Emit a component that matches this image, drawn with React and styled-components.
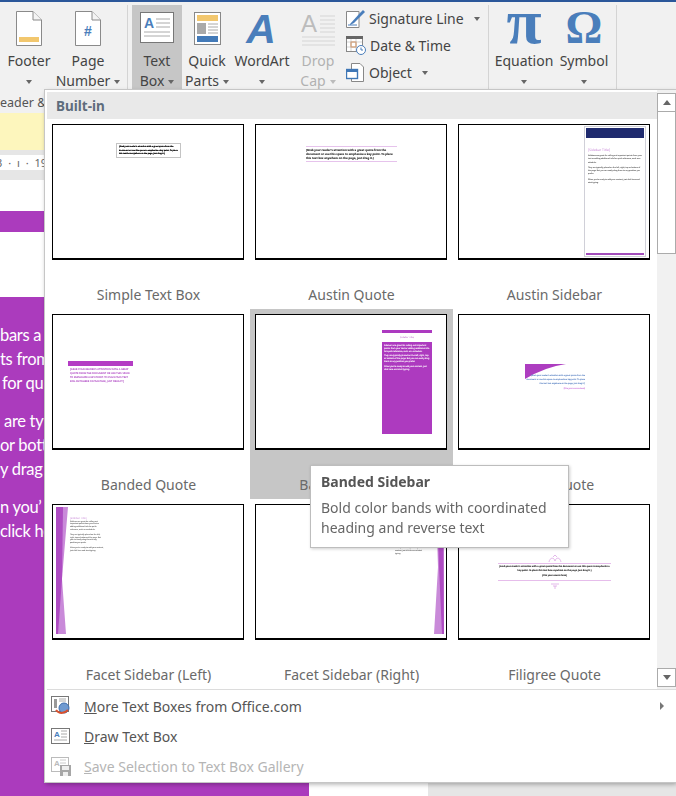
import React from 'react';
import styled, { createGlobalStyle } from 'styled-components';

const UI_FONT = `"Noto Sans", "Open Sans", "Liberation Sans", sans-serif`;
const PURPLE = '#ab3bbd';
const ICON_BLUE = '#4a7ebb';

const GlobalStyle = createGlobalStyle`
  html, body {
    margin: 0;
    padding: 0;
    background: #fff;
  }
  body {
    font-family: ${UI_FONT};
  }
`;

const Screen = styled.div`
  position: relative;
  width: 676px;
  height: 796px;
  overflow: hidden;
  display: flex;
  flex-direction: column;
`;

/* ribbon */
const Ribbon = styled.div`
  height: 111px;
  flex: none;
  border-top: 2px solid #2b579a;
  background: #f1f1f1;
  display: flex;
  flex-direction: column;
`;

const RibbonRow = styled.div`
  display: flex;
  height: 85px;
  margin-top: 3px;
  padding-left: 4px;
`;

const GroupCaption = styled.div`
  padding-top: 3px;
  font-size: 12.5px;
  line-height: 20px;
  color: #555;
  white-space: nowrap;
`;

const GroupLine = styled.div`
  width: 1px;
  background: #d4d4d4;
  margin: 0 ${p => p.$after ?? 4}px 0 ${p => p.$before ?? 5}px;
`;

const BigButton = styled.div`
  width: ${p => p.$w}px;
  flex: none;
  display: flex;
  flex-direction: column;
  align-items: center;
  background: ${p => (p.$active ? '#c6c6c6' : 'transparent')};
  color: ${p => (p.$off ? '#b1b1b1' : '#444')};
  font-size: 14px;
  line-height: 20px;
  white-space: nowrap;
`;

const BigIcon = styled.div`
  height: 46px;
  flex: none;
  display: flex;
  align-items: center;
  justify-content: center;
  & svg {
    overflow: visible;
  }
`;

const Caret = styled.span`
  display: inline-block;
  width: 0;
  height: 0;
  margin-left: ${p => p.$gap ?? 4}px;
  vertical-align: 2px;
  border-left: 3.5px solid transparent;
  border-right: 3.5px solid transparent;
  border-top: 4px solid ${p => (p.$off ? '#bbb' : '#666')};
`;

const SmallColumn = styled.div`
  width: 142px;
  flex: none;
  padding-left: 2px;
  box-sizing: border-box;
  display: flex;
  flex-direction: column;
`;

const SmallButton = styled.div`
  height: 27px;
  display: flex;
  align-items: center;
  gap: 3px;
  font-size: 14px;
  color: #444;
  white-space: nowrap;
`;

const SmallCaret = styled(Caret)`
  margin-left: ${p => p.$gap}px;
  vertical-align: 0;
`;

/* document behind the menu */
const YellowBar = styled.div`
  height: 37px;
  flex: none;
  background: #fdf6bd;
`;

const GreyStrip = styled.div`
  height: ${p => p.$h}px;
  flex: none;
  background: #e6e6e6;
`;

const Ruler = styled.div`
  height: 15px;
  flex: none;
  background: #fff;
  color: #666;
  font-size: 11px;
  line-height: 15px;
  white-space: nowrap;
  word-spacing: 3px;
  text-indent: -4px;
`;

const Workspace = styled.div`
  flex: 1;
  display: flex;
  background: #e6e6e6;
`;

const Page = styled.div`
  width: 428px;
  background: #fff;
  display: flex;
  flex-direction: column;
  padding-top: 31px;
  box-sizing: border-box;
`;

const TitleBand = styled.div`
  height: 21px;
  flex: none;
  background: ${PURPLE};
`;

const PurpleColumn = styled.div`
  flex: 1;
  width: 309px;
  margin-top: 65px;
  padding-top: 26px;
  background: ${PURPLE};
  color: #fff;
  font-family: Lato, "Open Sans", sans-serif;
  font-size: 16.5px;
  letter-spacing: -0.3px;
  line-height: 24px;
`;

const ColumnPara = styled.div`
  margin-bottom: 14px;
`;

const ColumnLine = styled.div`
  padding-left: ${p => p.$x || 0}px;
  white-space: nowrap;
`;

/* dropdown */
const Menu = styled.div`
  position: absolute;
  left: 45px;
  top: 90px;
  right: 0;
  height: 692px;
  box-sizing: border-box;
  padding-left: 2px;
  background: #fff;
  box-shadow: 0 0 0 1px #c6c6c6, 1px 2px 5px rgba(0, 0, 0, 0.35);
  display: flex;
  flex-direction: column;
`;

const GalleryArea = styled.div`
  height: 599px;
  flex: none;
  display: flex;
  border-bottom: 1px solid #dcdcdc;
`;

const GalleryPane = styled.div`
  width: 610px;
  flex: none;
  padding-top: 2px;
  box-sizing: border-box;
  overflow: hidden;
`;

const SectionHead = styled.div`
  height: 27px;
  padding-left: 9px;
  background: #e9e9e9;
  color: #5e6c7c;
  font-size: 13.5px;
  font-weight: 700;
  line-height: 28px;
`;

const Grid = styled.div`
  display: grid;
  grid-template-columns: repeat(3, 203px);
  grid-auto-rows: 190px;
`;

const Cell = styled.div`
  padding: 5px;
  box-sizing: border-box;
  background: ${p => (p.$hot ? '#c6c6c6' : 'transparent')};
`;

const Thumb = styled.div`
  width: 192px;
  height: 136px;
  box-sizing: border-box;
  border: 1px solid #000;
  border-bottom-width: 2px;
  background: #fff;
  overflow: hidden;
  display: flex;
  flex-direction: column;
  align-items: ${p => p.$align || 'flex-start'};
`;

const CellLabel = styled.div`
  margin-top: 25px;
  text-align: center;
  color: #6a6a6a;
  font-size: 14px;
  line-height: 20px;
`;

const Tiny = styled.div`
  font-size: ${p => p.$size || 2.2}px;
  line-height: ${p => p.$lh || 3.6}px;
  font-weight: ${p => (p.$bold ? 700 : 400)};
  color: ${p => p.$color || '#222'};
  text-align: ${p => p.$align || 'left'};
  margin-top: ${p => p.$top || 0}px;
  text-rendering: geometricPrecision;
  will-change: opacity;
  -webkit-text-stroke: ${p => p.$ink || 0}px currentColor;
`;

const SimpleBox = styled.div`
  width: 65px;
  height: 15px;
  box-sizing: border-box;
  margin: 18px 0 0 63px;
  padding: 1px 2px;
  border: 1px solid #c4c4c4;
`;

const RuledQuote = styled.div`
  width: 91px;
  margin: 21px 0 0 50px;
  padding: 1px 0;
  border-top: 1px solid #e6c3ec;
  border-bottom: 1px solid #e6c3ec;
`;

const AustinSide = styled.div`
  width: 62px;
  height: 131px;
  box-sizing: border-box;
  margin: 1px 3px 0 0;
  padding: 1px;
  border: 1px solid #d0d0d8;
  display: flex;
  flex-direction: column;
`;

const NavyHead = styled.div`
  height: 10px;
  flex: none;
  background: #1f2a6e;
`;

const AustinBody = styled.div`
  flex: 1;
  padding: 9px 2px 0;
`;

const AustinFoot = styled.div`
  height: 2px;
  flex: none;
  background: #a24dbb;
`;

const BandedQuoteBox = styled.div`
  width: 65px;
  margin: 46px 0 0 15px;
`;

const QuoteBand = styled.div`
  height: 5px;
  margin-bottom: 2px;
  background: #b43cc4;
`;

const QuoteCopy = styled.div`
  padding: 0 2px;
`;

const BandedSide = styled.div`
  width: 50px;
  margin: 15px 14px 0 0;
`;

const SideBandTop = styled.div`
  height: 3px;
  background: #ac3ac0;
`;

const SideBandBody = styled.div`
  height: 92px;
  box-sizing: border-box;
  margin-top: 2px;
  padding: 3px 2px;
  background: #ad3abf;
`;

const WedgeBlock = styled.div`
  width: 60px;
  margin: 49px 0 0 66px;
`;

const Wedge = styled.svg`
  display: block;
  margin-bottom: -6px;
`;

const FacetRow = styled.div`
  display: flex;
  height: 100%;
  width: 100%;
  justify-content: ${p => (p.$right ? 'flex-end' : 'flex-start')};
  padding: 2px 2px 3px 3px;
  box-sizing: border-box;
`;

const FacetText = styled.div`
  width: ${p => p.$w}px;
  margin: ${p => p.$top}px ${p => p.$mr || 0}px 0 1px;
`;

const FacetShape = styled.svg`
  flex: none;
`;

const FiligreeBlock = styled.div`
  width: 113px;
  margin: 50px 0 0 39px;
  display: flex;
  flex-direction: column;
  align-items: center;
`;

const FiligreeRule = styled.div`
  width: 100%;
  padding: 1px 0 2px;
  border-top: 1px solid #e6bdeb;
  border-bottom: 1px solid #e6bdeb;
`;

const Ornament = styled.svg`
  display: block;
  margin-top: ${p => p.$top || 0}px;
`;

const Scrollbar = styled.div`
  flex: 1;
  padding-top: 3px;
  background: #f1f1f1;
  display: flex;
  flex-direction: column;
  align-items: stretch;
`;

const ScrollButton = styled.div`
  height: 19px;
  flex: none;
  box-sizing: border-box;
  border: 1px solid #ababab;
  background: #fff;
  display: flex;
  align-items: center;
  justify-content: center;
  margin-top: ${p => (p.$down ? 'auto' : '0')};
  margin-bottom: ${p => (p.$down ? '2px' : '0')};
`;

const ScrollArrow = styled.span`
  width: 0;
  height: 0;
  border-left: 4.5px solid transparent;
  border-right: 4.5px solid transparent;
  border-${p => (p.$down ? 'top' : 'bottom')}: 5px solid #666;
`;

const ScrollThumb = styled.div`
  height: 142px;
  flex: none;
  box-sizing: border-box;
  border: 1px solid #ababab;
  border-top: 0;
  background: #fff;
`;

const MenuList = styled.div`
  padding-top: 1px;
  display: flex;
  flex-direction: column;
`;

const MenuItem = styled.div`
  height: 30px;
  display: flex;
  align-items: center;
  padding: 0 12px 0 4px;
  color: ${p => (p.$off ? '#b5b5b5' : '#555')};
  font-size: 14px;
  white-space: nowrap;
`;

const MenuIcon = styled.div`
  width: 33px;
  flex: none;
  display: flex;
`;

const SubArrow = styled.span`
  margin-left: auto;
  width: 0;
  height: 0;
  border-top: 4px solid transparent;
  border-bottom: 4px solid transparent;
  border-left: 4px solid #777;
`;

const Tooltip = styled.div`
  position: absolute;
  left: 310px;
  top: 465px;
  width: 259px;
  height: 83px;
  box-sizing: border-box;
  padding: 6px 10px;
  background: #fff;
  border: 1px solid #bdbdbd;
  box-shadow: 1px 1px 3px rgba(0, 0, 0, 0.2);
  color: #666;
  font-size: 14px;
  line-height: 20px;
`;

const TooltipTitle = styled.div`
  font-weight: 700;
  color: #555;
  margin-bottom: 6px;
`;

/* icons */
const DocIcon = ({ children }) => (
  <svg width="26" height="35" viewBox="0 0 26 35">
    <path d="M.5.5H17L25.5 9V34.5H.5Z" fill="#fff" stroke="#8a8a8a" />
    <path d="M17 .5V9H25.5" fill="#f4f4f4" stroke="#8a8a8a" />
    {children}
  </svg>
);

const TextBoxIcon = () => (
  <svg width="34" height="32" viewBox="0 0 34 32">
    <rect x=".5" y=".5" width="33" height="30" fill="#fff" stroke="#777" />
    <text x="4" y="16" fontFamily="Liberation Sans" fontWeight="bold" fontSize="14" fill={ICON_BLUE}>A</text>
    <path d="M16 7H30M16 11H30M16 15H30M4 20H30M4 24H30" stroke="#aaa" />
  </svg>
);

const QuickPartsIcon = () => (
  <svg width="27" height="33" viewBox="0 0 27 33">
    <rect x=".5" y=".5" width="26" height="32" fill="#fff" stroke="#888" />
    <rect x="3" y="3" width="21" height="6" fill="#f2c76e" />
    <rect x="3" y="11" width="9" height="11" fill="#a9a9a9" />
    <path d="M14 12H24M14 15H24M14 18H24M14 21H24" stroke="#aaa" />
    <rect x="3" y="24" width="21" height="6" fill="#437ab8" />
  </svg>
);

const WordArtIcon = () => (
  <svg width="34" height="42" viewBox="0 0 34 42">
    <text x="16" y="36" textAnchor="middle" fontFamily="Liberation Sans" fontStyle="italic" fontWeight="bold" fontSize="41" fill={ICON_BLUE}>A</text>
  </svg>
);

const DropCapIcon = () => (
  <svg width="34" height="37" viewBox="0 -4 34 37">
    <text x="0" y="18" fontFamily="Liberation Sans" fontSize="24" fill="#bcbcbc">A</text>
    <path d="M19 2H34M19 6H34M19 10H34M19 14H34M19 18H34M1 23H34M1 27H34M1 31H34" stroke="#d5d5d5" />
  </svg>
);

const MathIcon = ({ glyph, size, y }) => (
  <svg width="42" height="44" viewBox="0 0 42 44">
    <text x="21" y={y} textAnchor="middle" fontFamily="Liberation Serif" fontWeight="bold" fontSize={size} fill={ICON_BLUE}>{glyph}</text>
  </svg>
);

const SignatureIcon = () => (
  <svg width="20" height="20" viewBox="0 0 20 20">
    <path d="M.5 2.5H13V18.5H.5Z" fill="#fff" stroke="#888" />
    <path d="M4 15L14 4L17 1L19 3L8 14L4 16Z" fill="#4a7ebb" />
    <path d="M2 16H11" stroke="#4a7ebb" />
  </svg>
);

const CalendarIcon = () => (
  <svg width="21" height="20" viewBox="0 0 21 20">
    <rect x=".5" y=".5" width="16" height="15" fill="#fff" stroke="#888" />
    <rect x="0" y="0" width="17" height="3" fill="#666" />
    <rect x="5" y="6" width="5" height="5" fill="#fff" stroke="#d9772c" />
    <path d="M1 6H16M1 11H16M5 3V15M10 3V15" stroke="#bbb" strokeWidth=".6" />
    <circle cx="15" cy="14" r="4.5" fill="#fff" stroke="#4a7ebb" />
    <path d="M15 11.5V14H17" fill="none" stroke="#4a7ebb" />
  </svg>
);

const ObjectIcon = () => (
  <svg width="20" height="20" viewBox="0 0 20 20">
    <path d="M5.5 .5H14L17.5 4V18.5H5.5Z" fill="#fff" stroke="#888" />
    <rect x=".5" y="6.5" width="11" height="9" fill="#fff" stroke="#3f77b6" strokeWidth="1.4" />
    <rect x="1" y="7" width="10" height="2" fill="#3f77b6" />
  </svg>
);

const MoreBoxesIcon = () => (
  <svg width="20" height="20" viewBox="0 0 20 20">
    <rect x=".5" y=".5" width="17" height="15" fill="#fff" stroke="#777" />
    <rect x="3" y="3" width="3" height="9" fill="#999" />
    <path d="M8 3H15M8 5H15" stroke="#aaa" />
    <circle cx="13" cy="12" r="5" fill="#6f9ad0" stroke="#3f6fae" />
    <path d="M5 14C8 18 13 18 17 14" fill="none" stroke="#d8502e" strokeWidth="2" />
  </svg>
);

const DrawBoxIcon = () => (
  <svg width="19" height="17" viewBox="0 0 19 17">
    <rect x=".5" y=".5" width="18" height="15" fill="#fff" stroke="#777" />
    <text x="3" y="9" fontFamily="Liberation Sans" fontWeight="bold" fontSize="8" fill={ICON_BLUE}>A</text>
    <path d="M10 3H16M10 6H16M10 9H16M3 12H16" stroke="#aaa" />
  </svg>
);

const SaveBoxIcon = () => (
  <svg width="20" height="19" viewBox="0 0 20 19">
    <rect x=".5" y=".5" width="17" height="14" fill="#fff" stroke="#bbb" />
    <text x="3" y="9" fontFamily="Liberation Sans" fontWeight="bold" fontSize="8" fill="#bbb">A</text>
    <path d="M9 3H15M9 6H15" stroke="#ccc" />
    <rect x="9" y="8" width="11" height="11" fill="#a6a6a6" />
    <rect x="11" y="9" width="7" height="4" fill="#eee" />
    <rect x="12" y="15" width="5" height="4" fill="#eee" />
  </svg>
);

const GRAB = "[Grab your reader's attention with a great quote from the document or use this space to emphasize a key point. To place this text box anywhere on the page, just drag it.]";
const SIDE_A = 'Sidebars are great for calling out important points from your text or adding additional info for quick reference, such as a schedule.';
const SIDE_B = 'They are typically placed on the left, right, top or bottom of the page. But you can easily drag them to any position you prefer.';
const SIDE_C = "When you're ready to add your content, just click here and start typing.";

const SideCopy = ({ color, size, lh, ink }) => (
  <>
    <Tiny $color={color} $size={size} $lh={lh} $ink={ink}>{SIDE_A}</Tiny>
    <Tiny $color={color} $size={size} $lh={lh} $ink={ink} $top={2}>{SIDE_B}</Tiny>
    <Tiny $color={color} $size={size} $lh={lh} $ink={ink} $top={2}>{SIDE_C}</Tiny>
  </>
);

const FacetLeft = () => (
  <FacetShape width="13" height="128" viewBox="0 0 13 128">
    <path d="M0 0H12L6 72L10 127H0Z" fill="#c98ad9" />
    <path d="M0 0H7L6 72L2 127H0Z" fill="#ae4cc2" />
  </FacetShape>
);

const FacetRight = () => (
  <FacetShape width="10" height="128" viewBox="0 0 10 128">
    <path d="M2 0H10V127H0L4 60Z" fill="#c98ad9" />
    <path d="M3 0H9L10 127H8L5 60Z" fill="#ae4cc2" />
  </FacetShape>
);

const previews = [
  {
    name: 'Simple Text Box',
    body: (
      <Thumb>
        <SimpleBox><Tiny $bold $size={1.9} $lh={3.7} $color="#000" $ink={0.2}>{GRAB}</Tiny></SimpleBox>
      </Thumb>
    ),
  },
  {
    name: 'Austin Quote',
    body: (
      <Thumb>
        <RuledQuote><Tiny $bold $size={2.8} $lh={4} $color="#222" $ink={0.1}>{GRAB}</Tiny></RuledQuote>
      </Thumb>
    ),
  },
  {
    name: 'Austin Sidebar',
    body: (
      <Thumb $align="flex-end">
        <AustinSide>
          <NavyHead />
          <AustinBody>
            <Tiny $size={3.4} $lh={5} $color="#c98bd8">[Sidebar Title]</Tiny>
            <Tiny $top={2} />
            <SideCopy color="#666" size={1.9} lh={3.3} ink={0.08} />
          </AustinBody>
          <AustinFoot />
        </AustinSide>
      </Thumb>
    ),
  },
  {
    name: 'Banded Quote',
    body: (
      <Thumb>
        <BandedQuoteBox>
          <QuoteBand />
          <QuoteCopy>
            <Tiny $size={2.5} $lh={3.9} $color="#b04cc4" $ink={0.1}>{GRAB.toUpperCase()}</Tiny>
          </QuoteCopy>
        </BandedQuoteBox>
      </Thumb>
    ),
  },
  {
    name: 'Banded Sidebar',
    hot: true,
    body: (
      <Thumb $align="flex-end">
        <BandedSide>
          <SideBandTop />
          <Tiny $size={2.2} $lh={5} $align="center" $color="#b765c9" $top={2}>[Sidebar Title]</Tiny>
          <SideBandBody><SideCopy color="#fff" size={2.1} lh={2.8} ink={0.08} /></SideBandBody>
        </BandedSide>
      </Thumb>
    ),
  },
  {
    name: 'Facet Quote',
    body: (
      <Thumb>
        <WedgeBlock>
          <Wedge width="42" height="16" viewBox="0 0 42 16">
            <path d="M0 0H41Q20 3 0 15Z" fill="#ad3dc0" />
          </Wedge>
          <Tiny $size={2} $lh={4.1} $align="right" $color="#5f86c4" $ink={0.1}>{GRAB}</Tiny>
          <Tiny $size={2} $lh={4} $align="right" $color="#cf7fdc" $ink={0.1} $top={1}>[Cite your source here]</Tiny>
        </WedgeBlock>
      </Thumb>
    ),
  },
  {
    name: 'Facet Sidebar (Left)',
    body: (
      <Thumb>
        <FacetRow>
          <FacetLeft />
          <FacetText $w={34} $top={10}>
            <Tiny $size={2.6} $lh={3.6} $color="#c98bd8">[Sidebar Title]</Tiny>
            <SideCopy color="#777" size={1.8} lh={2.8} ink={0.08} />
          </FacetText>
        </FacetRow>
      </Thumb>
    ),
  },
  {
    name: 'Facet Sidebar (Right)',
    body: (
      <Thumb>
        <FacetRow $right>
          <FacetText $w={30} $top={14} $mr={9}>
            <SideCopy color="#777" size={1.8} lh={2.8} ink={0.08} />
          </FacetText>
          <FacetRight />
        </FacetRow>
      </Thumb>
    ),
  },
  {
    name: 'Filigree Quote',
    body: (
      <Thumb>
        <FiligreeBlock>
          <Ornament width="14" height="8" viewBox="0 0 14 8">
            <path d="M1 7C2 2 6 2 7 6C8 2 12 2 13 7M5 2L7 0L9 2" fill="none" stroke="#dca6e4" strokeWidth=".8" />
          </Ornament>
          <FiligreeRule>
            <Tiny $bold $size={2.2} $lh={3.6} $align="center" $ink={0.1}>{GRAB}</Tiny>
            <Tiny $bold $size={2.2} $lh={3.6} $align="center" $ink={0.1} $top={2}>[Cite your source here]</Tiny>
          </FiligreeRule>
          <Ornament $top={2} width="8" height="7" viewBox="0 0 8 7">
            <path d="M0 1H8M2 3H6M4 3V6" fill="none" stroke="#dca6e4" strokeWidth=".8" />
          </Ornament>
        </FiligreeBlock>
      </Thumb>
    ),
  },
];

export default function App() {
  return (
    <Screen>
      <GlobalStyle />

      <Ribbon>
        <RibbonRow>
          <BigButton $w={50}>
            <BigIcon>
              <DocIcon><rect x="3" y="26" width="20" height="5" fill="#f2c76e" /></DocIcon>
            </BigIcon>
            Footer
            <div><Caret $gap={0} /></div>
          </BigButton>
          <BigButton $w={68}>
            <BigIcon>
              <DocIcon>
                <text x="13" y="25" textAnchor="middle" fontFamily="Liberation Sans" fontWeight="bold" fontSize="14" fill={ICON_BLUE}>#</text>
              </DocIcon>
            </BigIcon>
            Page
            <div>Number<Caret /></div>
          </BigButton>
          <GroupLine />
          <BigButton $w={50} $active>
            <BigIcon><TextBoxIcon /></BigIcon>
            Text
            <div>Box<Caret /></div>
          </BigButton>
          <BigButton $w={50}>
            <BigIcon><QuickPartsIcon /></BigIcon>
            Quick
            <div>Parts<Caret /></div>
          </BigButton>
          <BigButton $w={60}>
            <BigIcon><WordArtIcon /></BigIcon>
            WordArt
            <div><Caret $gap={0} /></div>
          </BigButton>
          <BigButton $w={52} $off>
            <BigIcon><DropCapIcon /></BigIcon>
            Drop
            <div>Cap<Caret $off /></div>
          </BigButton>
          <SmallColumn>
            <SmallButton><SignatureIcon />Signature Line<SmallCaret $gap={7} /></SmallButton>
            <SmallButton><CalendarIcon />Date &amp; Time</SmallButton>
            <SmallButton><ObjectIcon />Object<SmallCaret $gap={7} /></SmallButton>
          </SmallColumn>
          <GroupLine $before={2} $after={0} />
          <BigButton $w={70}>
            <BigIcon><MathIcon glyph="π" size={64} y={37} /></BigIcon>
            Equation
            <div><Caret $gap={0} /></div>
          </BigButton>
          <BigButton $w={50}>
            <BigIcon><MathIcon glyph="Ω" size={46} y={37} /></BigIcon>
            Symbol
            <div><Caret $gap={0} /></div>
          </BigButton>
          <GroupLine $before={7} />
        </RibbonRow>
        <GroupCaption>eader &amp;</GroupCaption>
      </Ribbon>

      <YellowBar />
      <GreyStrip $h={5} />
      <Ruler>3 · ı · 19</Ruler>
      <GreyStrip $h={10} />
      <Workspace>
        <Page>
          <TitleBand />
          <PurpleColumn>
            <ColumnPara>
              <ColumnLine>bars a</ColumnLine>
              <ColumnLine>ts from</ColumnLine>
              <ColumnLine $x={2}>for qui</ColumnLine>
            </ColumnPara>
            <ColumnPara>
              <ColumnLine $x={4}>are ty</ColumnLine>
              <ColumnLine>or bott</ColumnLine>
              <ColumnLine>y drag</ColumnLine>
            </ColumnPara>
            <ColumnPara>
              <ColumnLine>n you’</ColumnLine>
              <ColumnLine>click he</ColumnLine>
            </ColumnPara>
          </PurpleColumn>
        </Page>
      </Workspace>

      <Menu>
        <GalleryArea>
          <GalleryPane>
            <SectionHead>Built-in</SectionHead>
            <Grid>
              {previews.map(item => (
                <Cell key={item.name} $hot={item.hot}>
                  {item.body}
                  <CellLabel>{item.name}</CellLabel>
                </Cell>
              ))}
            </Grid>
          </GalleryPane>
          <Scrollbar>
            <ScrollButton><ScrollArrow /></ScrollButton>
            <ScrollThumb />
            <ScrollButton $down><ScrollArrow $down /></ScrollButton>
          </Scrollbar>
        </GalleryArea>
        <MenuList>
          <MenuItem>
            <MenuIcon><MoreBoxesIcon /></MenuIcon>
            <span><u>M</u>ore Text Boxes from Office.com</span>
            <SubArrow />
          </MenuItem>
          <MenuItem>
            <MenuIcon><DrawBoxIcon /></MenuIcon>
            <span><u>D</u>raw Text Box</span>
          </MenuItem>
          <MenuItem $off>
            <MenuIcon><SaveBoxIcon /></MenuIcon>
            <span><u>S</u>ave Selection to Text Box Gallery</span>
          </MenuItem>
        </MenuList>
      </Menu>

      <Tooltip>
        <TooltipTitle>Banded Sidebar</TooltipTitle>
        Bold color bands with coordinated heading and reverse text
      </Tooltip>
    </Screen>
  );
}
